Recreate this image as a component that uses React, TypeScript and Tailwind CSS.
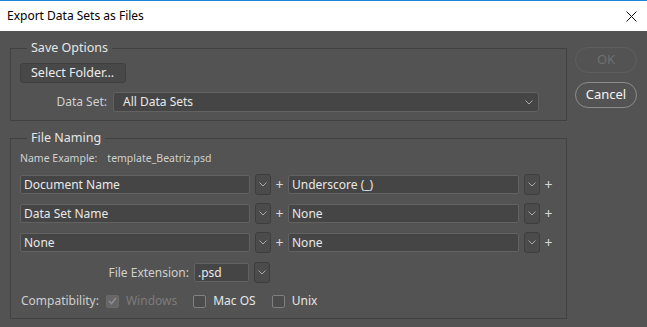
import React from "react";

const Chevron = () => (
  <svg width="8" height="5" viewBox="0 0 8 5" className="block">
    <path d="M0.5 0.5 L4 4 L7.5 0.5" fill="none" stroke="#a8a8a8" strokeWidth="1" />
  </svg>
);

const DropButton = () => (
  <div className="w-[16px] h-[21px] shrink-0 flex items-center justify-center rounded-[3px] border border-[#3d3d3d] bg-[#4b4b4b]">
    <Chevron />
  </div>
);

const Field = ({ value, w }: { value: string; w: string }) => (
  <div className={`${w} h-[19px] shrink-0 flex items-center px-[3px] rounded-[2px] border border-[#626262] bg-[#454545] text-[#e8e8e8]`}>
    {value}
  </div>
);

const Plus = () => (
  <div className="w-[17px] shrink-0 text-center text-[#d8d8d8] text-[14px] leading-none">+</div>
);

const NameRow = ({ a, b }: { a: string; b: string }) => (
  <div className="flex items-center h-[21px]">
    <Field value={a} w="w-[230px]" />
    <div className="w-[5px]" />
    <DropButton />
    <Plus />
    <Field value={b} w="w-[231px]" />
    <div className="w-[5px]" />
    <DropButton />
    <Plus />
  </div>
);

const Check = ({ label, checked, disabled }: { label: string; checked?: boolean; disabled?: boolean }) => (
  <div className="flex items-center">
    <div
      className={`w-[13px] h-[13px] rounded-[2px] border flex items-center justify-center ${
        disabled ? "border-[#6a6a6a] bg-[#666666]" : "border-[#808080] bg-[#4c4c4c]"
      }`}
    >
      {checked && (
        <svg width="9" height="8" viewBox="0 0 9 8">
          <path d="M1 4 L3.5 6.5 L8 1" fill="none" stroke="#8c8c8c" strokeWidth="1.6" />
        </svg>
      )}
    </div>
    <span className={`ml-[7px] ${disabled ? "text-[#7c7c7c]" : "text-[#e6e6e6]"}`}>{label}</span>
  </div>
);

export default function App() {
  return (
    <div className="w-[647px] h-[327px] flex flex-col bg-[#535353] font-['Noto_Sans',sans-serif] text-[12px] overflow-hidden">
      {/* title bar */}
      <div className="h-[31px] shrink-0 bg-white border-t border-[#1a84d8] flex items-center justify-between pl-[7px] pr-[10px]">
        <span className="text-black text-[12px]">Export Data Sets as Files</span>
        <svg width="11" height="11" viewBox="0 0 11 11">
          <path d="M0.5 0.5 L10.5 10.5 M10.5 0.5 L0.5 10.5" stroke="#111" strokeWidth="1" />
        </svg>
      </div>

      <div className="flex flex-1 pl-[10px]">
        <div className="w-[557px] flex flex-col pt-[9px]">
          <fieldset className="border border-[#414141] pl-[9px] pr-[27px] pb-[8px]">
            <legend className="ml-[7px] px-[4px] text-[#e6e6e6] text-[12.5px] leading-[16px]">Save Options</legend>
            <div className="pt-[7px]">
              <div className="w-[106px] h-[20px] flex items-center pl-[10px] rounded-[3px] border border-[#3f3f3f] bg-[#484848] text-[#ececec] text-[12.5px]">
                Select Folder...
              </div>
            </div>
            <div className="flex items-center mt-[9px]">
              <span className="w-[87px] text-right text-[#cfcfcf]">Data Set:</span>
              <div className="ml-[6px] flex-1 h-[20px] flex items-center justify-between pl-[9px] pr-[5px] rounded-[3px] border border-[#626262] bg-[#454545] text-[#e8e8e8]">
                All Data Sets
                <Chevron />
              </div>
            </div>
          </fieldset>

          <fieldset className="mt-[9px] border border-[#414141] pl-[9px] pb-[8px]">
            <legend className="ml-[7px] px-[4px] text-[#e6e6e6] text-[12.5px] leading-[16px]">File Naming</legend>
            <div className="flex items-center h-[14px] mt-[6px] text-[10.5px] text-[#d0d0d0]">
              <span>Name Example:</span>
              <span className="ml-[10px]">template_Beatriz.psd</span>
            </div>
            <div className="flex flex-col gap-[8px] mt-[8px]">
              <NameRow a="Document Name" b="Underscore (_)" />
              <NameRow a="Data Set Name" b="None" />
              <NameRow a="None" b="None" />
            </div>
            <div className="flex items-center h-[21px] mt-[9px]">
              <span className="w-[169px] text-right text-[#cfcfcf]">File Extension:</span>
              <div className="w-[5px]" />
              <Field value=".psd" w="w-[55px]" />
              <div className="w-[5px]" />
              <DropButton />
            </div>
            <div className="flex items-center mt-[9px] h-[18px]">
              <span className="text-[#cfcfcf] ml-[1px]">Compatibility:</span>
              <div className="ml-[7px]">
                <Check label="Windows" checked disabled />
              </div>
              <div className="ml-[16px]">
                <Check label="Mac OS" />
              </div>
              <div className="ml-[16px]">
                <Check label="Unix" />
              </div>
            </div>
          </fieldset>
        </div>

        <div className="ml-[8px] pt-[16px] flex flex-col gap-[9px]">
          <div className="w-[62px] h-[26px] rounded-full border border-[#5f5f5f] flex items-center justify-center text-[#707070] text-[13px]">
            OK
          </div>
          <div className="w-[62px] h-[26px] rounded-full border border-[#8c8c8c] flex items-center justify-center text-[#f2f2f2] text-[13px]">
            Cancel
          </div>
        </div>
      </div>
    </div>
  );
}
